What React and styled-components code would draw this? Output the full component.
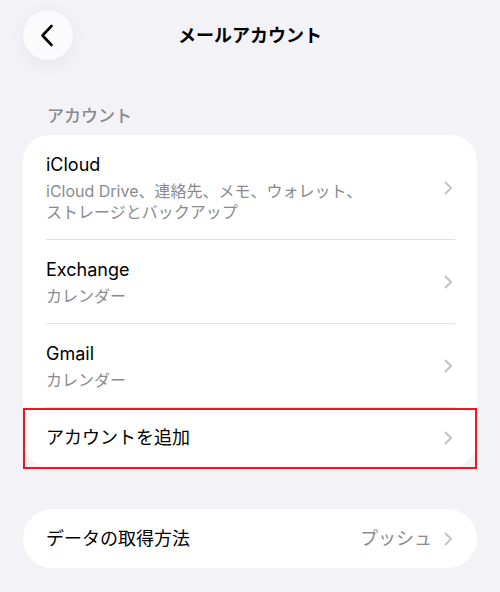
import styled, { createGlobalStyle } from 'styled-components'

const GlobalStyle = createGlobalStyle`
  html, body {
    margin: 0;
    padding: 0;
    background: #f2f2f7;
  }
  body {
    font-family: Inter, "Noto Sans CJK JP", sans-serif;
    color: #000;
    -webkit-font-smoothing: antialiased;
  }
`

const accounts = [
  { name: 'iCloud', detail: 'iCloud Drive、連絡先、メモ、ウォレット、\nストレージとバックアップ' },
  { name: 'Exchange', detail: 'カレンダー' },
  { name: 'Gmail', detail: 'カレンダー' },
]

function Chevron() {
  return (
    <ChevronIcon width="9" height="14" viewBox="0 0 9 14" fill="none">
      <path d="M1.5 1.5 L7 7 L1.5 12.5" stroke="#c4c4c7" strokeWidth="2" strokeLinecap="round" strokeLinejoin="round" />
    </ChevronIcon>
  )
}

export default function App() {
  return (
    <>
      <GlobalStyle />
      <Page>
        <Header>
          <BackButton type="button" aria-label="戻る">
            <svg width="14" height="23" viewBox="0 0 14 23" fill="none">
              <path d="M11.5 2 L2.5 11.5 L11.5 21" stroke="#000" strokeWidth="2.6" strokeLinecap="round" strokeLinejoin="round" />
            </svg>
          </BackButton>
          <Title>メールアカウント</Title>
          <span />
        </Header>

        <SectionLabel>アカウント</SectionLabel>
        <Card>
          {accounts.map((a) => (
            <Row key={a.name}>
              <RowBody $divider $tall>
                <TextCol>
                  <RowTitle>{a.name}</RowTitle>
                  <RowDetail>{a.detail}</RowDetail>
                </TextCol>
                <Chevron />
              </RowBody>
            </Row>
          ))}
          <Row $highlight>
            <RowBody>
              <TextCol>
                <RowTitle>アカウントを追加</RowTitle>
              </TextCol>
              <Chevron />
            </RowBody>
          </Row>
        </Card>

        <Card $pill>
          <Row>
            <RowBody>
              <TextCol>
                <RowTitle>データの取得方法</RowTitle>
              </TextCol>
              <Value>プッシュ</Value>
              <Chevron />
            </RowBody>
          </Row>
        </Card>
      </Page>
    </>
  )
}

const Page = styled.div`
  width: 500px;
  min-height: 592px;
  box-sizing: border-box;
  padding: 10px 23px 0;
`

const Header = styled.header`
  display: grid;
  grid-template-columns: 50px 1fr 50px;
  align-items: center;
  height: 50px;
`

const BackButton = styled.button`
  width: 50px;
  height: 50px;
  border: none;
  border-radius: 50%;
  background: #fbfbfd;
  box-shadow: 0 4px 18px rgba(0, 0, 0, 0.06);
  display: flex;
  align-items: center;
  justify-content: center;
  padding: 0;
  cursor: pointer;

  svg {
    margin-right: 3px;
  }
`

const Title = styled.h1`
  margin: 0;
  text-align: center;
  font-size: 18px;
  font-weight: 700;
  line-height: 26px;
  padding-top: 2px;
`

const SectionLabel = styled.div`
  margin: 44px 0 7px 24px;
  font-size: 17px;
  font-weight: 500;
  line-height: 24px;
  color: #8a8a8e;
`

const Card = styled.section`
  background: #fff;
  border-radius: ${(p) => (p.$pill ? '30px' : '26px')};
  margin-bottom: 42px;
`

const Row = styled.div`
  position: relative;
  padding-left: 23px;

  ${(p) =>
    p.$highlight &&
    `
    &::after {
      content: '';
      position: absolute;
      top: 0;
      left: 0;
      right: 0;
      bottom: -2px;
      border: 2px solid #ee1420;
      pointer-events: none;
    }
  `}
`

const RowBody = styled.div`
  display: flex;
  align-items: center;
  gap: 12px;
  margin-right: 22px;
  padding-right: 2px;
  min-height: 59px;
  box-sizing: border-box;
  padding-top: ${(p) => (p.$tall ? '17px' : '0')};
  padding-bottom: ${(p) => (p.$tall ? '16px' : '0')};
  border-bottom: ${(p) => (p.$divider ? '1px solid #e2e2e6' : 'none')};
`

const TextCol = styled.div`
  flex: 1;
  display: flex;
  flex-direction: column;
`

const RowTitle = styled.div`
  font-size: 18px;
  line-height: 26px;
  color: #000;
`

const RowDetail = styled.div`
  margin-top: 3px;
  font-size: 16px;
  line-height: 21px;
  color: #8a8a8e;
  white-space: pre-line;
`

const Value = styled.div`
  font-size: 18px;
  line-height: 26px;
  color: #8a8a8e;
`

const ChevronIcon = styled.svg`
  flex: none;
  display: block;
`
